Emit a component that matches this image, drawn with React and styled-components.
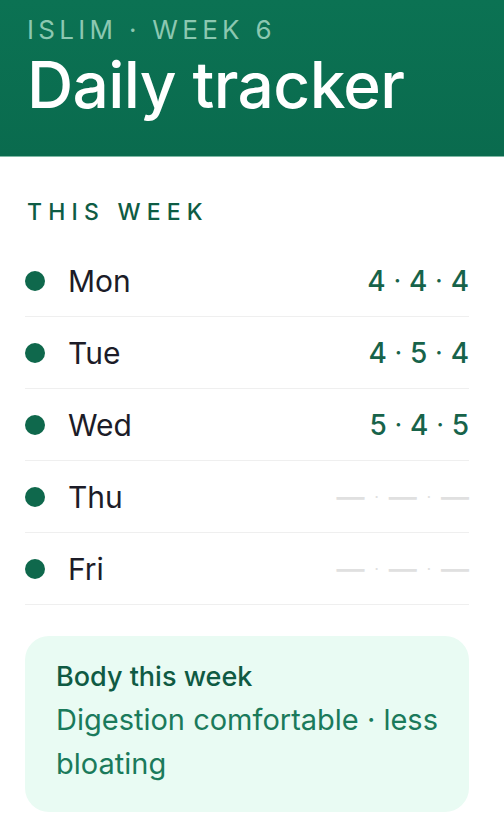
import React from 'react';
import styled, { createGlobalStyle } from 'styled-components';

const GlobalStyle = createGlobalStyle`
  body {
    margin: 0;
    background: #ffffff;
    font-family: 'Inter', 'Noto Sans', sans-serif;
  }
`;

const Page = styled.div`
  width: 504px;
  min-height: 822px;
  background: #ffffff;
`;

const Header = styled.header`
  height: 157px;
  box-sizing: border-box;
  padding: 14px 27px 0;
  background: linear-gradient(180deg, #0b7253 0%, #0a6b4e 100%);
  border-bottom: 1px solid #7fb9a5;
`;

const Eyebrow = styled.div`
  font-size: 26px;
  line-height: 32px;
  letter-spacing: 4.3px;
  color: #8cc8b1;
`;

const Title = styled.h1`
  margin: 3px 0 0;
  font-size: 64px;
  line-height: 72px;
  font-weight: 500;
  letter-spacing: -0.6px;
  color: #ffffff;
`;

const Body = styled.main`
  padding: 38px 35px 0 25px;
`;

const SectionLabel = styled.div`
  padding-left: 2px;
  font-size: 23px;
  line-height: 34px;
  font-weight: 500;
  letter-spacing: 6.2px;
  color: #0e5c44;
  margin-bottom: 16px;
`;

const DayList = styled.ul`
  list-style: none;
  margin: 0;
  padding: 0;
`;

const DayRow = styled.li`
  height: 72px;
  box-sizing: border-box;
  display: flex;
  align-items: center;
  border-bottom: 1.5px solid #efefef;
`;

const Dot = styled.span`
  width: 20px;
  height: 20px;
  border-radius: 50%;
  background: #0f684c;
  flex-shrink: 0;
`;

const DayName = styled.span`
  margin-left: 23px;
  font-size: 30px;
  color: #1c1c28;
  flex: 1;
`;

const Score = styled.span`
  display: flex;
  align-items: center;
  gap: ${(p) => (p.$empty ? '10px' : '8px')};
  font-size: 28px;
  font-weight: 500;
  color: ${(p) => (p.$empty ? '#e0e0e0' : '#17634a')};
`;

const Sep = styled.span`
  font-size: ${(p) => (p.$empty ? '14px' : '24px')};
`;

const Card = styled.section`
  margin-top: 31px;
  padding: 22px 31px 26px;
  border-radius: 24px;
  background: #e9fbf3;
`;

const CardTitle = styled.div`
  font-size: 27px;
  line-height: 38px;
  font-weight: 500;
  color: #0f5a43;
`;

const CardText = styled.div`
  margin-top: 2px;
  font-size: 29px;
  line-height: 44px;
  color: #1a7a5b;
`;

const days = [
  { name: 'Mon', scores: [4, 4, 4] },
  { name: 'Tue', scores: [4, 5, 4] },
  { name: 'Wed', scores: [5, 4, 5] },
  { name: 'Thu', scores: null },
  { name: 'Fri', scores: null },
];

function ScoreLine({ scores }) {
  const empty = !scores;
  const parts = empty ? ['—', '—', '—'] : scores;
  return (
    <Score $empty={empty}>
      {parts.map((v, i) => (
        <React.Fragment key={i}>
          {i > 0 && <Sep $empty={empty}>·</Sep>}
          <span>{v}</span>
        </React.Fragment>
      ))}
    </Score>
  );
}

export default function App() {
  return (
    <Page>
      <GlobalStyle />
      <Header>
        <Eyebrow>ISLIM · WEEK 6</Eyebrow>
        <Title>Daily tracker</Title>
      </Header>
      <Body>
        <SectionLabel>THIS WEEK</SectionLabel>
        <DayList>
          {days.map((d) => (
            <DayRow key={d.name}>
              <Dot />
              <DayName>{d.name}</DayName>
              <ScoreLine scores={d.scores} />
            </DayRow>
          ))}
        </DayList>
        <Card>
          <CardTitle>Body this week</CardTitle>
          <CardText>Digestion comfortable · less bloating</CardText>
        </Card>
      </Body>
    </Page>
  );
}
